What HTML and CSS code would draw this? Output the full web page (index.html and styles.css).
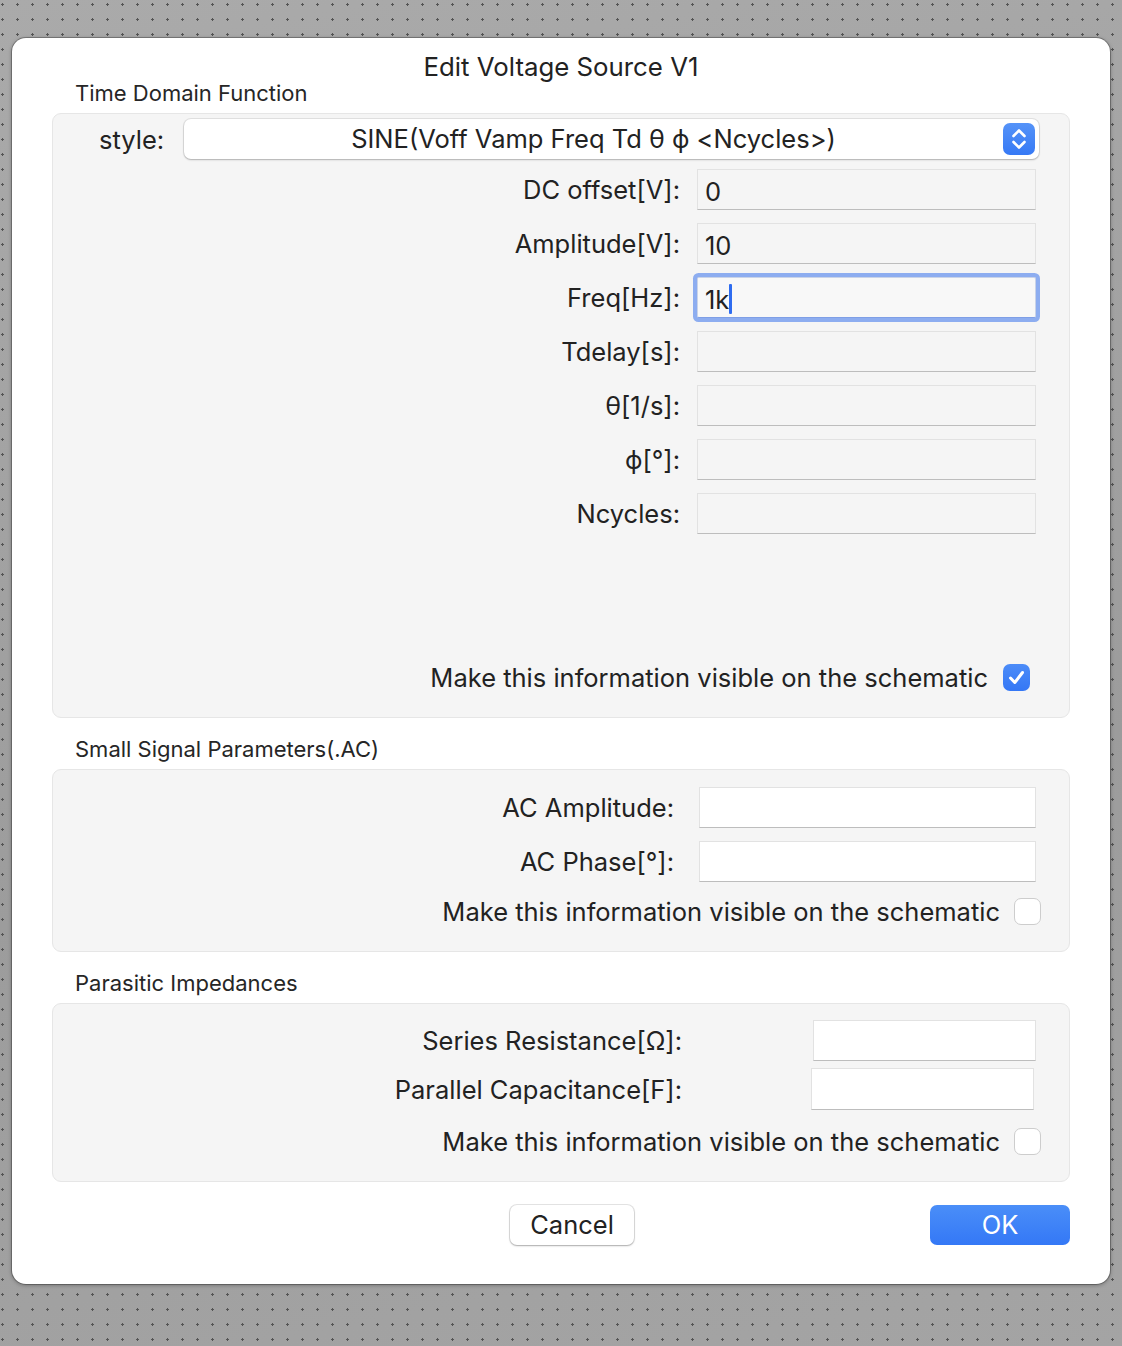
FILE: index.html
```html
<!DOCTYPE html>
<html>
<head>
<meta charset="utf-8">
<link rel="stylesheet" href="styles.css">
</head>
<body>
<div class="dialog">
  <div class="title">Edit Voltage Source V1</div>
  <div class="section-label first">Time Domain Function</div>
  <div class="panel panel-tdf">
    <div class="style-row">
      <span class="style-label">style:</span>
      <div class="popup">
        <span class="popup-text">SINE(Voff Vamp Freq Td θ ϕ &lt;Ncycles&gt;)</span>
        <span class="stepper">
          <svg width="32" height="32" viewBox="0 0 32 32"><path d="M10.5 13 L16 7.5 L21.5 13" fill="none" stroke="#fff" stroke-width="2.6" stroke-linecap="round" stroke-linejoin="round"/><path d="M10.5 19 L16 24.5 L21.5 19" fill="none" stroke="#fff" stroke-width="2.6" stroke-linecap="round" stroke-linejoin="round"/></svg>
        </span>
      </div>
    </div>
    <div class="fields fields-tdf">
      <label class="lbl">DC offset[V]:</label><div class="field">0</div>
      <label class="lbl">Amplitude[V]:</label><div class="field">10</div>
      <label class="lbl">Freq[Hz]:</label><div class="field focused">1k<span class="caret"></span></div>
      <label class="lbl">Tdelay[s]:</label><div class="field"></div>
      <label class="lbl">θ[1/s]:</label><div class="field"></div>
      <label class="lbl">ϕ[°]:</label><div class="field"></div>
      <label class="lbl">Ncycles:</label><div class="field"></div>
    </div>
    <div class="check-row check-row-1">
      <span>Make this information visible on the schematic</span>
      <span class="checkbox checked"><svg width="27" height="27" viewBox="0 0 27 27"><path d="M7.5 14 L11.8 18.5 L19.5 8.5" fill="none" stroke="#fff" stroke-width="3" stroke-linecap="round" stroke-linejoin="round"/></svg></span>
    </div>
  </div>

  <div class="section-label">Small Signal Parameters(.AC)</div>
  <div class="panel panel-ac">
    <div class="fields fields-ac">
      <label class="lbl">AC Amplitude:</label><div class="field white"></div>
      <label class="lbl">AC Phase[°]:</label><div class="field white"></div>
    </div>
    <div class="check-row check-row-2">
      <span>Make this information visible on the schematic</span>
      <span class="checkbox"></span>
    </div>
  </div>

  <div class="section-label">Parasitic Impedances</div>
  <div class="panel panel-par">
    <div class="par-row par-row-1">
      <label class="lbl">Series Resistance[Ω]:</label><div class="field white par1"></div>
    </div>
    <div class="par-row par-row-2">
      <label class="lbl">Parallel Capacitance[F]:</label><div class="field white par2"></div>
    </div>
    <div class="check-row check-row-3">
      <span>Make this information visible on the schematic</span>
      <span class="checkbox"></span>
    </div>
  </div>

  <div class="buttons">
    <div class="btn cancel">Cancel</div>
    <div class="btn ok">OK</div>
  </div>
</div>
</body>
</html>
```

FILE: styles.css
```css
html, body {
  margin: 0;
  padding: 0;
}
body {
  width: 1122px;
  height: 1346px;
  overflow: hidden;
  font-family: "Inter", "Roboto", "Liberation Sans", sans-serif;
  color: #222;
  background-color: #a0a0a0;
  background-image:
    radial-gradient(circle at 50% 50%, #555 0 1.1px, transparent 1.4px),
    linear-gradient(170deg, #aaaaaa 0%, #9c9c9c 60%, #a4a4a4 100%);
  background-size: 15px 15px, 100% 100%;
  background-position: -5px -3px, 0 0;
  padding-top: 38px;
  padding-left: 12px;
  box-sizing: border-box;
}
.dialog {
  width: 1098px;
  height: 1246px;
  background: #fff;
  border-radius: 14px;
  box-shadow: 0 0 0 1px rgba(0,0,0,0.25), 0 1px 4px rgba(0,0,0,0.35);
  padding: 0 40px;
  box-sizing: border-box;
  display: flex;
  flex-direction: column;
}
.title {
  margin-top: 14px;
  height: 30px;
  line-height: 30px;
  text-align: center;
  font-size: 25.8px;
  color: #222;
}
.section-label {
  margin-top: 20px;
  height: 22px;
  line-height: 22px;
  font-size: 22px;
  padding-left: 23px;
  color: #262626;
  margin-bottom: 9px;
}
.section-label.first {
  margin-top: 0;
}
.panel {
  background: #f5f5f5;
  border: 1px solid #e6e6e6;
  border-radius: 9px;
  box-sizing: border-box;
  display: flex;
  flex-direction: column;
}
.panel-tdf {
  height: 605px;
  padding: 5px 0 0 0;
}
.panel-ac {
  height: 183px;
  padding-top: 17px;
}
.panel-par {
  height: 179px;
  padding-top: 16px;
}
.style-row {
  display: flex;
  align-items: center;
  height: 40px;
}
.style-label {
  width: 131px;
  padding-left: 46px;
  box-sizing: border-box;
  font-size: 25.5px;
}
.popup {
  width: 855px;
  height: 40px;
  background: #fff;
  border-radius: 7px;
  box-shadow: 0 0 0 1px rgba(0,0,0,0.08), 0 1px 2px rgba(0,0,0,0.22);
  display: flex;
  align-items: center;
  padding-right: 4px;
  box-sizing: border-box;
}
.popup-text {
  flex: 1;
  text-align: center;
  font-size: 25.5px;
  color: #222;
  padding-bottom: 2px;
}
.stepper {
  width: 32px;
  height: 32px;
  border-radius: 7px;
  background: linear-gradient(#5593f8, #3679f5);
  display: flex;
}
.fields {
  display: grid;
  column-gap: 17px;
  align-items: center;
}
.fields-tdf {
  grid-template-columns: 1fr 339px;
  row-gap: 13px;
  margin-top: 10px;
  padding-right: 33px;
}
.fields-ac {
  grid-template-columns: 1fr 337px;
  column-gap: 25px;
  row-gap: 13px;
  padding-right: 33px;
}
.lbl {
  text-align: right;
  font-size: 25.5px;
  color: #222;
}
.field {
  height: 41px;
  box-sizing: border-box;
  background: #f5f5f5;
  border: 1px solid #e2e2e2;
  border-bottom: 1px solid #bdbdbd;
  font-size: 25.5px;
  line-height: 41px;
  padding-left: 7px;
  padding-top: 3px;
  color: #222;
  display: flex;
  align-items: center;
}
.field.white {
  background: #fff;
}
.field.focused {
  background: #f8f8f8;
  box-shadow: 0 0 0 4px #8dadf0;
  border-radius: 2px;
  border-color: #c9d3e8;
  border-bottom-color: #7f9fe6;
  padding-left: 7px;
}
.caret {
  display: inline-block;
  width: 3px;
  height: 30px;
  background: #2e6cf0;
  border-radius: 1px;
  margin-left: 0;
}
.check-row {
  margin-top: auto;
  display: flex;
  align-items: center;
  justify-content: flex-end;
  font-size: 25.5px;
  color: #222;
}
.check-row-1 {
  padding-right: 39px;
  margin-bottom: 24px;
  gap: 15px;
}
.check-row-2 {
  padding-right: 28px;
  margin-bottom: 24px;
  gap: 14px;
}
.check-row-3 {
  padding-right: 28px;
  margin-bottom: 24px;
  gap: 14px;
}
.checkbox {
  width: 27px;
  height: 27px;
  box-sizing: border-box;
  border-radius: 7px;
  background: #fff;
  border: 1px solid #cdcdcd;
  display: flex;
}
.checkbox.checked {
  background: linear-gradient(#4c8cf8, #3477f5);
  border: none;
}
.par-row {
  display: flex;
  align-items: center;
}
.par-row .lbl {
  width: 629px;
}
.par-row-1 .field {
  width: 223px;
  margin-left: 131px;
}
.par-row-2 {
  margin-top: 7px;
}
.par-row-2 .field {
  width: 223px;
  margin-left: 129px;
  height: 42px;
}
.buttons {
  margin-top: 23px;
  display: flex;
  align-items: center;
  height: 40px;
}
.btn {
  height: 40px;
  line-height: 40px;
  text-align: center;
  font-size: 25.5px;
  border-radius: 7px;
  box-sizing: border-box;
}
.cancel {
  width: 124px;
  margin-left: 458px;
  background: #fff;
  box-shadow: 0 0 0 1px rgba(0,0,0,0.1), 0 1px 2px rgba(0,0,0,0.25);
  color: #222;
}
.ok {
  width: 140px;
  margin-left: auto;
  background: linear-gradient(#4a8ef8, #3478f6);
  color: #fff;
}
```
